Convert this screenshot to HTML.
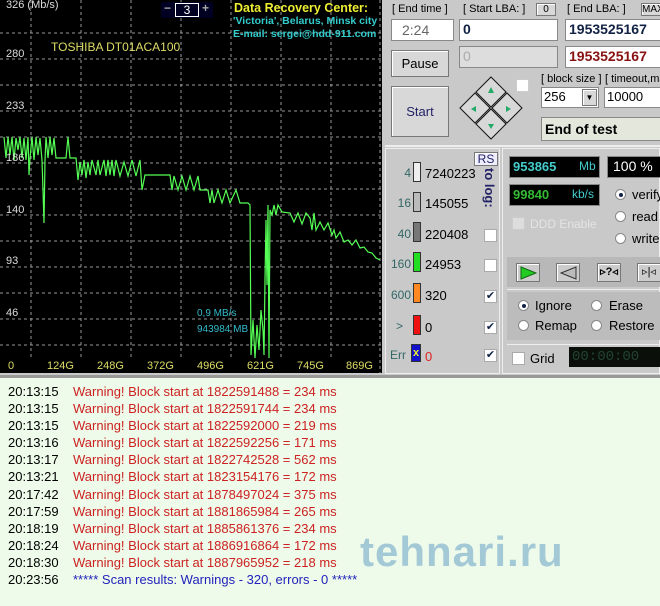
<!DOCTYPE html>
<html><head><meta charset="utf-8"><style>
body{margin:0;width:660px;height:606px;overflow:hidden;background:#c9c9c9;font-family:"Liberation Sans",Tahoma,sans-serif;position:relative}
.a{position:absolute}
.t{font-size:12px;color:#000;white-space:nowrap}
.box{background:#fff;border:1px solid #888;box-sizing:border-box}
.btn{background:#d8d8d8;border:1px solid #777;box-sizing:border-box;box-shadow:inset 1px 1px 0 #fff;text-align:center;font-size:13px}
.rad{width:11px;height:11px;border-radius:50%;background:#fff;border:1px solid #888;box-sizing:border-box}
.chk{width:13px;height:13px;background:#fff;border:1px solid #aaa;box-sizing:border-box;font-size:11px;line-height:11px;text-align:center;color:#124}
.sw{width:8px;height:20px;border:1px solid #333;box-sizing:border-box}
.log div{height:17.1px;line-height:17.1px}
.log span.tm{display:inline-block;width:73px;padding-left:8px;box-sizing:border-box}
</style></head><body>
<div class="a" style="left:0;top:0;width:382px;height:373px;background:#000">
<svg width="382" height="373" class="a" style="left:0;top:0">
<g stroke="#999" stroke-dasharray="3,3" stroke-width="1">
<line x1="0" y1="33" x2="382" y2="33"/><line x1="0" y1="59" x2="382" y2="59"/><line x1="0" y1="85" x2="382" y2="85"/><line x1="0" y1="111" x2="382" y2="111"/><line x1="0" y1="137" x2="382" y2="137"/><line x1="0" y1="163" x2="382" y2="163"/><line x1="0" y1="189" x2="382" y2="189"/><line x1="0" y1="215" x2="382" y2="215"/><line x1="0" y1="241" x2="382" y2="241"/><line x1="0" y1="267" x2="382" y2="267"/><line x1="0" y1="293" x2="382" y2="293"/><line x1="0" y1="319" x2="382" y2="319"/><line x1="0" y1="345" x2="382" y2="345"/>
<line x1="31" y1="0" x2="31" y2="360"/><line x1="81" y1="0" x2="81" y2="360"/><line x1="131" y1="0" x2="131" y2="360"/><line x1="181" y1="0" x2="181" y2="360"/><line x1="231" y1="0" x2="231" y2="360"/><line x1="281" y1="0" x2="281" y2="360"/><line x1="331" y1="0" x2="331" y2="360"/><line x1="380" y1="0" x2="380" y2="373"/>
</g>
<polyline fill="none" stroke="#5f5" stroke-width="1.2" points="4,137 6,158 8,137 10,155 12,137 14,160 16,138 18,150 20,137 22,158 24,138 26,160 28,137 29,175 30,158 32,137 34,160 36,137 38,155 40,138 42,160 43,190 44,223 45,160 46,137 48,158 50,137 52,155 54,138 56,158 58,158 66,158 68,137 70,158 76,158 78,180 80,162 82,175 84,160 86,178 88,162 90,175 92,160 96,175 98,160 100,175 104,160 106,176 108,160 110,175 112,160 114,176 116,160 120,176 124,162 128,176 132,160 136,176 140,160 142,190 145,175 150,175 170,175 172,190 174,176 178,190 182,176 186,190 190,176 194,190 198,176 200,190 204,190 208,190 210,203 212,190 214,203 218,190 222,203 226,190 230,203 236,190 240,203 244,203 248,203 250,205 251,355 253,320 255,358 257,325 259,350 261,310 263,330 264,355 265,280 266,220 267,285 268,205 269,358 270,210 272,215 274,205 276,215 278,205 282,212 290,213 294,222 298,213 302,224 306,213 310,218 312,230 314,213 316,230 320,222 324,230 328,223 332,235 334,230 336,238 340,232 344,242 348,240 352,245 356,240 360,248 364,247 368,252 372,253 376,258 380,260"/>
</svg>
<div class="a t" style="left:6px;top:-1px;color:#ddd;font-size:11px">326 (Mb/s)</div>
<div class="a t" style="left:6px;top:48px;color:#ddd;font-size:11px">280</div>
<div class="a t" style="left:6px;top:100px;color:#ddd;font-size:11px">233</div>
<div class="a t" style="left:6px;top:152px;color:#ddd;font-size:11px">186</div>
<div class="a t" style="left:6px;top:204px;color:#ddd;font-size:11px">140</div>
<div class="a t" style="left:6px;top:255px;color:#ddd;font-size:11px">93</div>
<div class="a t" style="left:6px;top:307px;color:#ddd;font-size:11px">46</div>
<div class="a t" style="left:8px;top:360px;color:#dd6;font-size:11px">0</div>
<div class="a t" style="left:47px;top:360px;color:#dd6;font-size:11px">124G</div>
<div class="a t" style="left:97px;top:360px;color:#dd6;font-size:11px">248G</div>
<div class="a t" style="left:147px;top:360px;color:#dd6;font-size:11px">372G</div>
<div class="a t" style="left:197px;top:360px;color:#dd6;font-size:11px">496G</div>
<div class="a t" style="left:247px;top:360px;color:#dd6;font-size:11px">621G</div>
<div class="a t" style="left:297px;top:360px;color:#dd6;font-size:11px">745G</div>
<div class="a t" style="left:346px;top:360px;color:#dd6;font-size:11px">869G</div>
<div class="a t" style="left:51px;top:40px;color:#dd6">TOSHIBA DT01ACA100</div>
<div class="a" style="left:161px;top:2px;width:52px;height:16px;background:#002"></div>
<div class="a t" style="left:164px;top:1px;color:#aaa;font-weight:bold">−</div>
<div class="a t" style="left:175px;top:3px;width:22px;height:12px;border:1px solid #fff;color:#fff;text-align:center;line-height:12px">3</div>
<div class="a t" style="left:202px;top:1px;color:#aaa;font-weight:bold">+</div>
<div class="a t" style="left:234px;top:1px;color:#ee3;font-weight:bold;font-size:12.5px">Data Recovery Center:</div>
<div class="a t" style="left:233px;top:15px;color:#3cc;font-weight:bold;font-size:10.5px">'Victoria', Belarus, Minsk city</div>
<div class="a t" style="left:233px;top:28px;color:#3cc;font-weight:bold;font-size:10.5px">E-mail: sergei@hdd-911.com</div>
<div class="a t" style="left:197px;top:308px;color:#3bc;font-size:10px">0,9 MB/s</div>
<div class="a t" style="left:197px;top:324px;color:#3bc;font-size:10px">943984 MB</div>
</div>
<!-- right top -->
<div class="a t" style="left:392px;top:3px;font-size:11px">[ End time ]</div>
<div class="a box" style="left:391px;top:19px;width:63px;height:22px;font-size:14px;color:#666;padding:2px 0 0 10px">2:24</div>
<div class="a t" style="left:463px;top:3px;font-size:11px">[ Start LBA: ]</div>
<div class="a btn" style="left:536px;top:3px;width:20px;height:13px;font-size:10px;line-height:11px">0</div>
<div class="a box" style="left:459px;top:19px;width:99px;height:22px;font-weight:bold;font-size:14px;color:#124;padding:1px 3px">0</div>
<div class="a box" style="left:459px;top:46px;width:99px;height:22px;background:#ddd;font-size:14px;color:#aaa;padding:1px 3px">0</div>
<div class="a t" style="left:567px;top:3px;font-size:11px">[ End LBA: ]</div>
<div class="a btn" style="left:641px;top:3px;width:22px;height:13px;font-size:10px;line-height:11px">MAX</div>
<div class="a box" style="left:565px;top:19px;width:100px;height:22px;font-weight:bold;font-size:14px;color:#124;padding:1px 3px">1953525167</div>
<div class="a box" style="left:565px;top:46px;width:100px;height:22px;font-weight:bold;font-size:14px;color:#811;padding:1px 3px">1953525167</div>
<div class="a btn" style="left:391px;top:50px;width:58px;height:27px;line-height:25px">Pause</div>
<div class="a btn" style="left:391px;top:86px;width:58px;height:51px;line-height:50px;color:#226">Start</div>
<svg class="a" style="left:458px;top:76px" width="66" height="66">
<g stroke="#111" fill="#d8d8d8"><polygon points="33,1 48,16 33,31 18,16"/><polygon points="48,16 63,31 48,46 33,31" transform="translate(1,1)"/><polygon points="18,16 33,31 18,46 3,31" transform="translate(-1,1)"/><polygon points="33,31 48,46 33,61 18,46" transform="translate(0,2)"/></g>
<g fill="#2a6"><polygon points="33,11 36,17 30,17"/><polygon points="33,53 36,48 30,48"/><polygon points="13,33 18,30 18,36"/><polygon points="53,33 48,30 48,36"/></g></svg>
<div class="a chk" style="left:516px;top:79px;border-color:#ccc"></div>
<div class="a t" style="left:541px;top:73px;font-size:11px">[ block size ]</div>
<div class="a t" style="left:605px;top:73px;font-size:11px">[ timeout,ms</div>
<div class="a box" style="left:541px;top:87px;width:58px;height:21px;font-size:13px;padding:1px 2px">256</div>
<div class="a btn" style="left:582px;top:89px;width:15px;height:17px;font-size:8px;line-height:16px">▼</div>
<div class="a box" style="left:604px;top:87px;width:58px;height:21px;font-size:13px;padding:1px 2px">10000</div>
<div class="a box" style="left:541px;top:117px;width:122px;height:24px;background:#e4e8dc;font-weight:bold;font-size:14px;padding:3px 3px">End of test</div>
<div class="a" style="left:385px;top:145px;width:275px;height:2px;background:#eee"></div>
<!-- left stats column -->
<div class="a" style="left:385px;top:148px;width:115px;height:226px;border:1px solid #eee;box-sizing:border-box"></div>
<div class="a btn" style="left:474px;top:152px;width:24px;height:14px;font-size:12px;line-height:12px;color:#226;background:#eef">RS</div>
<div class="a t" style="top:168px;transform:rotate(90deg);transform-origin:0 0;left:497px;color:#226;font-weight:bold;font-size:13px">to log:</div>
<div class="a t" style="left:397px;top:166px;color:#366;text-align:right;width:14px">4</div><div class="a sw" style="left:413px;top:162px;background:#eee"></div><div class="a t" style="left:425px;top:166px;font-size:13px">7240223</div>
<div class="a t" style="left:392px;top:196px;color:#366;text-align:right;width:19px">16</div><div class="a sw" style="left:413px;top:192px;background:#bbb"></div><div class="a t" style="left:425px;top:196px;font-size:13px">145055</div>
<div class="a t" style="left:392px;top:227px;color:#366;text-align:right;width:19px">40</div><div class="a sw" style="left:413px;top:222px;background:#777"></div><div class="a t" style="left:425px;top:227px;font-size:13px">220408</div>
<div class="a t" style="left:386px;top:257px;color:#366;text-align:right;width:25px">160</div><div class="a sw" style="left:413px;top:252px;background:#2d2"></div><div class="a t" style="left:425px;top:257px;font-size:13px">24953</div>
<div class="a t" style="left:386px;top:288px;color:#366;text-align:right;width:25px">600</div><div class="a sw" style="left:413px;top:283px;background:#f82"></div><div class="a t" style="left:425px;top:288px;font-size:13px">320</div>
<div class="a t" style="left:396px;top:319px;color:#366">&gt;</div><div class="a sw" style="left:413px;top:315px;background:#e11"></div><div class="a t" style="left:425px;top:320px;font-size:13px">0</div>
<div class="a t" style="left:390px;top:348px;color:#366">Err</div><div class="a sw" style="left:411px;top:344px;width:10px;height:18px;background:#11c;color:#ee3;font-size:11px;font-weight:bold;text-align:center;line-height:16px">x</div><div class="a t" style="left:425px;top:349px;color:#d22;font-size:13px">0</div>
<div class="a chk" style="left:484px;top:229px"></div><div class="a chk" style="left:484px;top:259px"></div><div class="a chk" style="left:484px;top:290px">✔</div><div class="a chk" style="left:484px;top:321px">✔</div><div class="a chk" style="left:484px;top:349px">✔</div>
<!-- mid right -->
<div class="a" style="left:502px;top:148px;width:158px;height:226px;border:1px solid #eee;box-sizing:border-box"></div>
<div class="a" style="left:509px;top:156px;width:89px;height:20px;background:#000;border:1px solid #888"><span class="a t" style="left:3px;top:2px;color:#4cc;font-weight:bold;font-size:13px">953865</span><span class="a t" style="left:69px;top:2px;color:#4cc;font-size:12px">Mb</span></div>
<div class="a" style="left:607px;top:156px;width:60px;height:20px;background:#000;border:1px solid #888"><span class="a t" style="left:5px;top:1px;color:#fff;font-size:14px">100 %</span></div>
<div class="a" style="left:509px;top:184px;width:89px;height:20px;background:#000;border:1px solid #888"><span class="a t" style="left:3px;top:2px;color:#3b3;font-weight:bold;font-size:13px">99840</span><span class="a t" style="left:62px;top:2px;color:#4cc;font-size:12px">kb/s</span></div>
<div class="a chk" style="left:512px;top:217px;background:#ddd;border-color:#ccc"></div><div class="a t" style="left:530px;top:217px;color:#e4e4e4;font-size:12px">DDD Enable</div>
<div class="a rad" style="left:615px;top:189px"></div><div class="a" style="left:619px;top:193px;width:4px;height:4px;border-radius:50%;background:#124"></div><div class="a t" style="left:632px;top:187px;font-size:13px">verify</div>
<div class="a rad" style="left:615px;top:211px"></div><div class="a t" style="left:632px;top:209px;font-size:13px">read</div>
<div class="a rad" style="left:615px;top:233px"></div><div class="a t" style="left:632px;top:231px;font-size:13px">write</div>
<div class="a" style="left:507px;top:257px;width:153px;height:30px;background:#b8b8b8"></div>
<div class="a btn" style="left:516px;top:263px;width:24px;height:19px;background:#ccc"><svg width="22" height="17"><polygon points="4,3 19,9 4,15" fill="#2c2" stroke="#161"/></svg></div>
<div class="a btn" style="left:556px;top:263px;width:24px;height:19px;background:#ccc"><svg width="22" height="17"><polygon points="19,3 4,9 19,15" fill="#bbb" stroke="#333"/></svg></div>
<div class="a btn" style="left:597px;top:263px;width:24px;height:19px;background:#ccc;font-size:11px;line-height:17px;font-weight:bold">▹?◃</div>
<div class="a btn" style="left:637px;top:263px;width:24px;height:19px;background:#ccc;font-size:11px;line-height:17px">▹|◃</div>
<div class="a" style="left:507px;top:289px;width:153px;height:1px;background:#eee"></div>
<div class="a" style="left:507px;top:292px;width:153px;height:48px;background:#bcbcbc"></div>
<div class="a rad" style="left:518px;top:300px"></div><div class="a" style="left:522px;top:304px;width:4px;height:4px;border-radius:50%;background:#124"></div><div class="a t" style="left:535px;top:298px;font-size:13px">Ignore</div>
<div class="a rad" style="left:518px;top:320px"></div><div class="a t" style="left:535px;top:318px;font-size:13px">Remap</div>
<div class="a rad" style="left:591px;top:300px"></div><div class="a t" style="left:609px;top:298px;font-size:13px">Erase</div>
<div class="a rad" style="left:591px;top:320px"></div><div class="a t" style="left:609px;top:318px;font-size:13px">Restore</div>
<div class="a" style="left:507px;top:344px;width:153px;height:1px;background:#eee"></div>
<div class="a chk" style="left:512px;top:352px"></div><div class="a t" style="left:530px;top:351px;font-size:13px">Grid</div>
<div class="a" style="left:569px;top:347px;width:91px;height:20px;background:#0a0f0a;color:#243;font-family:'Liberation Mono',monospace;font-size:14px;line-height:20px;padding-left:3px">00:00:00</div>
<!-- log -->
<div class="a" style="left:0;top:375px;width:660px;height:3px;background:#999"></div>
<div class="a log" style="left:0;top:378px;width:660px;height:228px;background:#eefbea;font-size:13px;padding-top:5px;box-sizing:border-box">
<div><span class="tm">20:13:15</span><span style="color:#c22">Warning! Block start at 1822591488 = 234 ms</span></div>
<div><span class="tm">20:13:15</span><span style="color:#c22">Warning! Block start at 1822591744 = 234 ms</span></div>
<div><span class="tm">20:13:15</span><span style="color:#c22">Warning! Block start at 1822592000 = 219 ms</span></div>
<div><span class="tm">20:13:16</span><span style="color:#c22">Warning! Block start at 1822592256 = 171 ms</span></div>
<div><span class="tm">20:13:17</span><span style="color:#c22">Warning! Block start at 1822742528 = 562 ms</span></div>
<div><span class="tm">20:13:21</span><span style="color:#c22">Warning! Block start at 1823154176 = 172 ms</span></div>
<div><span class="tm">20:17:42</span><span style="color:#c22">Warning! Block start at 1878497024 = 375 ms</span></div>
<div><span class="tm">20:17:59</span><span style="color:#c22">Warning! Block start at 1881865984 = 265 ms</span></div>
<div><span class="tm">20:18:19</span><span style="color:#c22">Warning! Block start at 1885861376 = 234 ms</span></div>
<div><span class="tm">20:18:24</span><span style="color:#c22">Warning! Block start at 1886916864 = 172 ms</span></div>
<div><span class="tm">20:18:30</span><span style="color:#c22">Warning! Block start at 1887965952 = 218 ms</span></div>
<div><span class="tm">20:23:56</span><span style="color:#22b">***** Scan results: Warnings - 320, errors - 0 *****</span></div>
</div>
<div class="a t" style="left:360px;top:528px;font-size:42px;font-weight:bold;color:#8ab8d0;opacity:.75;letter-spacing:1px">tehnari.ru</div>
</body></html>
